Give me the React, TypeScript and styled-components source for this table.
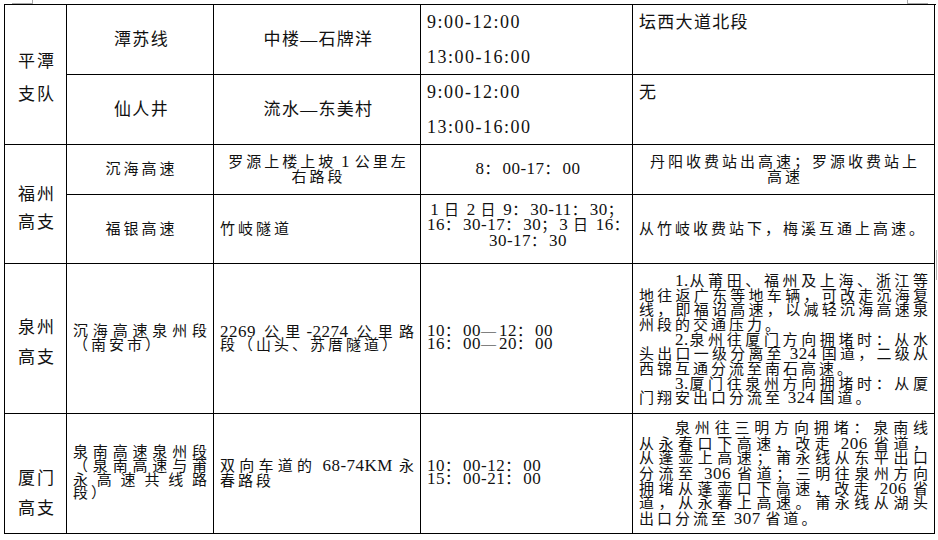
import React from "react";
import styled, { createGlobalStyle } from "styled-components";

type Kind = "unit" | "big" | "time" | "small";

const kindStyles: {
  [key in Kind]: { size: number; ls: number; lh: number; latin: number; latinLs: number };
} = {
  unit: { size: 17, ls: 2, lh: 30, latin: 17, latinLs: 0.5 },
  big: { size: 17, ls: 1.3, lh: 35, latin: 17, latinLs: 0.5 },
  time: { size: 17, ls: 0.5, lh: 35, latin: 18, latinLs: 1.5 },
  small: { size: 15, ls: 3, lh: 14.7, latin: 17, latinLs: 0.5 },
};

const GlobalStyle = createGlobalStyle`
  html, body {
    margin: 0;
    padding: 0;
    background: #fff;
  }
  body {
    font-family: "Liberation Serif", "Noto Sans CJK SC", serif;
    color: #111;
  }
`;

const Page = styled.div`
  position: relative;
  width: 938px;
  height: 540px;
  padding: 4px 0 0 4px;
  box-sizing: border-box;
  overflow: hidden;
  background: #fff;
`;

const Sheet = styled.div`
  display: grid;
  grid-template-columns: 62px 147px 207px 212px 302px;
  grid-template-rows: 70px 70px 50px 69px 150px 120px;
  width: 931px;
  border-top: 1px solid #000;
  border-left: 1px solid #000;
`;

const Cell = styled.div<{
  $kind: Kind;
  $align?: "left" | "center";
  $valign?: "top" | "middle";
  $rows?: number;
  $lh?: number;
  $pt?: number;
  $pb?: number;
}>`
  --lh: ${(p) => p.$lh ?? kindStyles[p.$kind].lh}px;
  --latin: ${(p) => kindStyles[p.$kind].latin}px;
  --latin-ls: ${(p) => kindStyles[p.$kind].latinLs}px;
  grid-row: span ${(p) => p.$rows ?? 1};
  display: flex;
  flex-direction: column;
  justify-content: ${(p) => (p.$valign === "top" ? "flex-start" : "center")};
  box-sizing: border-box;
  padding: ${(p) => p.$pt ?? 0}px 3px ${(p) => p.$pb ?? 0}px 6px;
  border-right: 1px solid #000;
  border-bottom: 1px solid #000;
  font-size: ${(p) => kindStyles[p.$kind].size}px;
  letter-spacing: ${(p) => kindStyles[p.$kind].ls}px;
  line-height: var(--lh);
  text-align: ${(p) => p.$align ?? "left"};
  min-width: 0;
`;

const Line = styled.span<{ $justify?: boolean; $indent?: boolean }>`
  display: block;
  height: var(--lh);
  white-space: nowrap;
  text-indent: ${(p) => (p.$indent ? "36px" : "0")};
  text-align: ${(p) => (p.$justify ? "justify" : "inherit")};
  text-align-last: ${(p) => (p.$justify ? "justify" : "auto")};
`;

const Latin = styled.span`
  font-size: var(--latin);
  letter-spacing: var(--latin-ls);
`;

const CropMark = styled.div<{ $side: "left" | "right" }>`
  position: absolute;
  top: 0;
  left: ${(p) => (p.$side === "left" ? 12 : 907)}px;
  width: 20px;
  height: 3px;
  border-bottom: 1px solid #a8a8a8;
  border-left: ${(p) => (p.$side === "right" ? "1px solid #a8a8a8" : "none")};
  border-right: ${(p) => (p.$side === "left" ? "1px solid #a8a8a8" : "none")};
`;

const EdgeMark = styled.div`
  position: absolute;
  left: 936px;
  top: 250px;
  height: 30px;
  border-left: 1px solid #b4b4b4;
`;

const rich = (s: string) =>
  s
    .split(/([\x20-\x7E]+)/)
    .filter(Boolean)
    .map((part, i) =>
      /^[\x20-\x7E]+$/.test(part) ? (
        <Latin key={i}>{part}</Latin>
      ) : (
        <React.Fragment key={i}>{part}</React.Fragment>
      )
    );

// every line but the last is stretched to the full width, like a justified paragraph
const Para = ({
  lines,
  justify,
  indent,
}: {
  lines: string[];
  justify?: boolean;
  indent?: boolean;
}) => (
  <>
    {lines.map((t, i) => (
      <Line
        key={i}
        $justify={justify && i < lines.length - 1}
        $indent={indent && i === 0}
      >
        {rich(t)}
      </Line>
    ))}
  </>
);

export default function App() {
  return (
    <>
      <GlobalStyle />
      <Page>
        <CropMark $side="left" />
        <CropMark $side="right" />
        <EdgeMark />
        <Sheet>
          {/* 平潭支队 */}
          <Cell $kind="unit" $align="center" $rows={2} $lh={33} $pt={7}>
            <Para lines={["平潭", "支队"]} />
          </Cell>
          <Cell $kind="big" $align="center">
            <Para lines={["潭苏线"]} />
          </Cell>
          <Cell $kind="big" $align="center">
            <Para lines={["中楼—石牌洋"]} />
          </Cell>
          <Cell $kind="time" $valign="top">
            <Para lines={["9:00-12:00", "13:00-16:00"]} />
          </Cell>
          <Cell $kind="big" $valign="top">
            <Para lines={["坛西大道北段"]} />
          </Cell>

          <Cell $kind="big" $align="center">
            <Para lines={["仙人井"]} />
          </Cell>
          <Cell $kind="big" $align="center">
            <Para lines={["流水—东美村"]} />
          </Cell>
          <Cell $kind="time" $valign="top">
            <Para lines={["9:00-12:00", "13:00-16:00"]} />
          </Cell>
          <Cell $kind="big" $valign="top">
            <Para lines={["无"]} />
          </Cell>

          {/* 福州高支 */}
          <Cell $kind="unit" $align="center" $rows={2} $lh={28} $pt={9}>
            <Para lines={["福州", "高支"]} />
          </Cell>
          <Cell $kind="small" $align="center">
            <Para lines={["沉海高速"]} />
          </Cell>
          <Cell $kind="small" $align="center">
            <Para lines={["罗源上楼上坡 1 公里左", "右路段"]} />
          </Cell>
          <Cell $kind="small" $align="center">
            <Para lines={["8：00-17：00"]} />
          </Cell>
          <Cell $kind="small" $align="center">
            <Para lines={["丹阳收费站出高速；罗源收费站上", "高速"]} />
          </Cell>

          <Cell $kind="small" $align="center">
            <Para lines={["福银高速"]} />
          </Cell>
          <Cell $kind="small">
            <Para lines={["竹岐隧道"]} />
          </Cell>
          <Cell $kind="small" $align="center" $lh={15.5} $pb={8}>
            <Para
              lines={["1 日 2 日 9：30-11：30；", "16：30-17：30；3 日 16：", "30-17：30"]}
            />
          </Cell>
          <Cell $kind="small">
            <Para lines={["从竹岐收费站下，梅溪互通上高速。"]} />
          </Cell>

          {/* 泉州高支 */}
          <Cell $kind="unit" $align="center" $pt={8}>
            <Para lines={["泉州", "高支"]} />
          </Cell>
          <Cell $kind="small" $lh={13.5}>
            <Para justify lines={["沉海高速泉州段", "（南安市）"]} />
          </Cell>
          <Cell $kind="small" $lh={13.5}>
            <Para justify lines={["2269 公里-2274 公里路", "段（山头、苏厝隧道）"]} />
          </Cell>
          <Cell $kind="small" $lh={12.5} $pb={2}>
            <Para lines={["10：00—12：00", "16：00—20：00"]} />
          </Cell>
          <Cell $kind="small" $pt={3}>
            <Para
              justify
              indent
              lines={[
                "1.从莆田、福州及上海、浙江等",
                "地往返广东等地车辆，可改走沉海复",
                "线，即福诏高速，以减轻沉海高速泉",
                "州段的交通压力。",
              ]}
            />
            <Para
              justify
              indent
              lines={[
                "2.泉州往厦门方向拥堵时：从水",
                "头出口一级分离至 324 国道，二级从",
                "西锦互通分流至南石高速。",
              ]}
            />
            <Para
              justify
              indent
              lines={["3.厦门往泉州方向拥堵时：从厦", "门翔安出口分流至 324 国道。"]}
            />
          </Cell>

          {/* 厦门高支 */}
          <Cell $kind="unit" $align="center" $pt={40}>
            <Para lines={["厦门", "高支"]} />
          </Cell>
          <Cell $kind="small" $lh={13.7}>
            <Para
              justify
              lines={["泉南高速泉州段", "（泉南高速与莆", "永高速共线路", "段）"]}
            />
          </Cell>
          <Cell $kind="small">
            <Para justify lines={["双向车道的 68-74KM 永", "春路段"]} />
          </Cell>
          <Cell $kind="small" $lh={13} $pb={3}>
            <Para lines={["10：00-12：00", "15：00-21：00"]} />
          </Cell>
          <Cell $kind="small" $lh={15}>
            <Para
              justify
              indent
              lines={[
                "泉州往三明方向拥堵：泉南线",
                "从永春口下高速，改走 206 省道，",
                "从蓬壶上高速；莆永线从东平出口",
                "分流至 306 省道；三明往泉州方向",
                "拥堵从蓬壶口下高速，改走 206 省",
                "道，从永春上高速。莆永线从湖头",
                "出口分流至 307 省道。",
              ]}
            />
          </Cell>
        </Sheet>
      </Page>
    </>
  );
}
